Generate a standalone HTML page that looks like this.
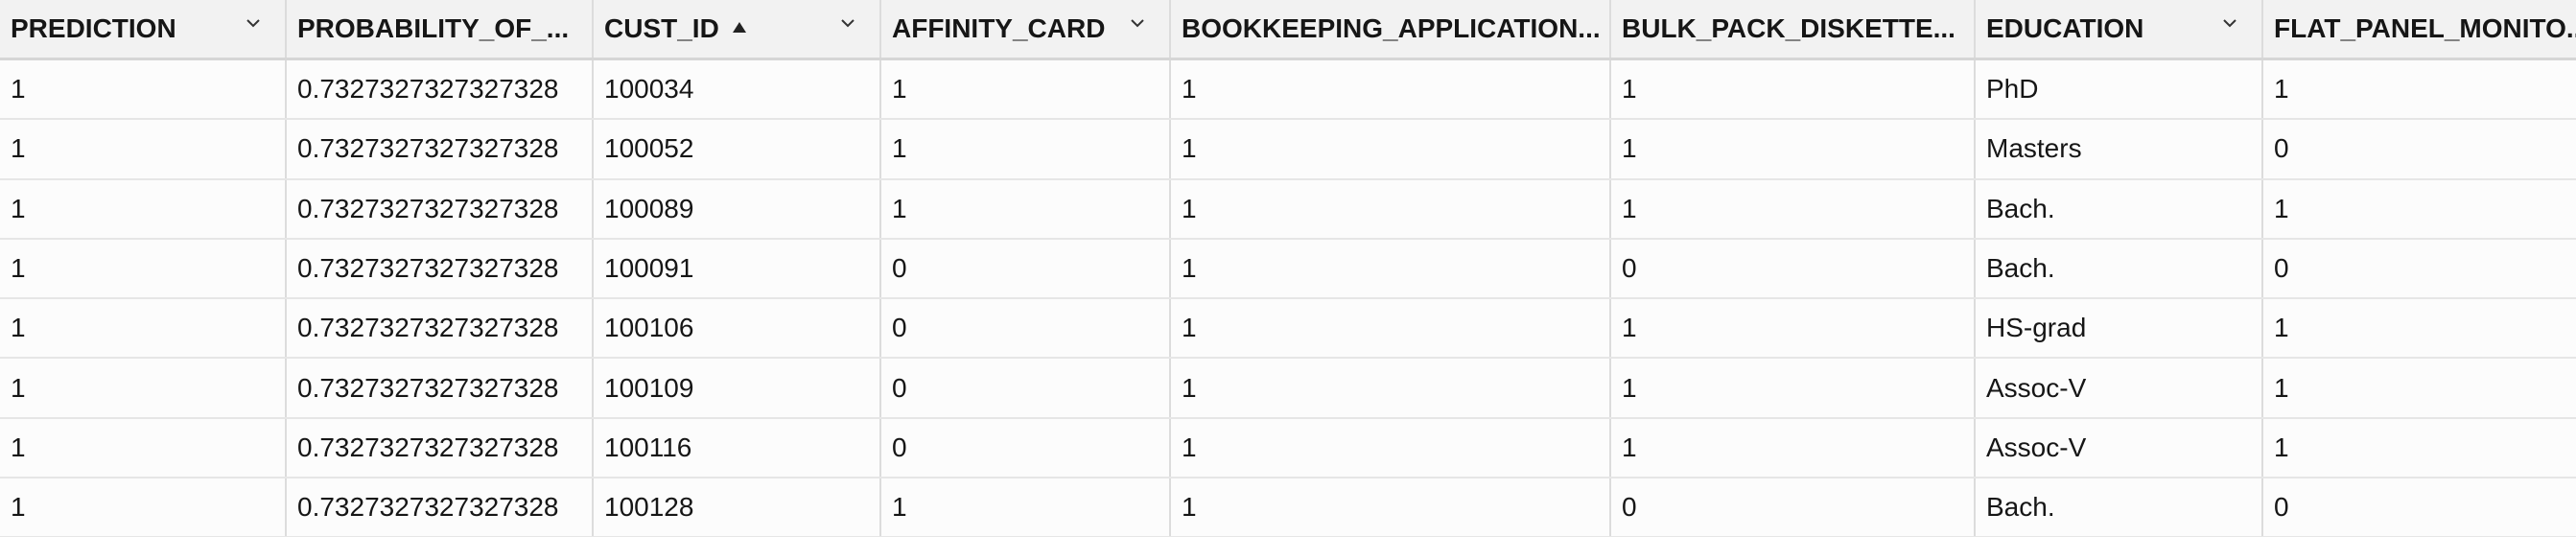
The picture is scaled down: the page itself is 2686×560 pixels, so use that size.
<!DOCTYPE html>
<html><head><meta charset="utf-8"><style>
html,body{margin:0;padding:0;width:2686px;height:560px;overflow:hidden;background:#fcfcfc;font-family:"Liberation Sans",Arial,sans-serif;color:#161616}
table{border-collapse:collapse;table-layout:fixed;width:2686px}
td,th{padding:0 0 0 11px;white-space:nowrap;overflow:hidden;text-align:left;border-left:2px solid #dcdcdc;position:relative}
td:first-child,th:first-child{border-left:none}
th{height:60px;background:#f2f2f2;font-size:28px;font-weight:bold;border-bottom:3px solid #d6d6d6}
td{height:60.3px;font-size:28px;border-bottom:2px solid #e6e6e6}
.t{display:block;overflow:hidden;text-overflow:ellipsis;padding-right:22px}
.c{position:absolute;right:26px;top:19px;width:14px;height:10px}
.c svg{display:block}
.tri{display:inline-block;margin-left:14px;width:0;height:0;border-left:7px solid transparent;border-right:7px solid transparent;border-bottom:11px solid #222;vertical-align:5px}
</style></head><body>
<table>
<colgroup><col style="width:298px"><col style="width:320px"><col style="width:300px"><col style="width:302px"><col style="width:459px"><col style="width:380px"><col style="width:300px"><col style="width:327px"></colgroup>
<tr>
<th><span class="t">PREDICTION</span><span class="c"><svg width="14" height="10" viewBox="0 0 14 10"><path d="M1 2 L7 8 L13 2" fill="none" stroke="#333" stroke-width="2"/></svg></span></th>
<th><span class="t" style="padding-right:14px">PROBABILITY_OF_...</span></th>
<th><span class="t">CUST_ID<span class="tri"></span></span><span class="c"><svg width="14" height="10" viewBox="0 0 14 10"><path d="M1 2 L7 8 L13 2" fill="none" stroke="#333" stroke-width="2"/></svg></span></th>
<th><span class="t">AFFINITY_CARD</span><span class="c"><svg width="14" height="10" viewBox="0 0 14 10"><path d="M1 2 L7 8 L13 2" fill="none" stroke="#333" stroke-width="2"/></svg></span></th>
<th><span class="t" style="padding-right:0">BOOKKEEPING_APPLICATION...</span></th>
<th><span class="t" style="padding-right:10px">BULK_PACK_DISKETTE...</span></th>
<th><span class="t">EDUCATION</span><span class="c"><svg width="14" height="10" viewBox="0 0 14 10"><path d="M1 2 L7 8 L13 2" fill="none" stroke="#333" stroke-width="2"/></svg></span></th>
<th><span class="t" style="padding-right:0;text-overflow:clip">FLAT_PANEL_MONITO...</span></th>
</tr>
<tr><td>1</td><td>0.7327327327327328</td><td>100034</td><td>1</td><td>1</td><td>1</td><td>PhD</td><td>1</td></tr>
<tr><td>1</td><td>0.7327327327327328</td><td>100052</td><td>1</td><td>1</td><td>1</td><td>Masters</td><td>0</td></tr>
<tr><td>1</td><td>0.7327327327327328</td><td>100089</td><td>1</td><td>1</td><td>1</td><td>Bach.</td><td>1</td></tr>
<tr><td>1</td><td>0.7327327327327328</td><td>100091</td><td>0</td><td>1</td><td>0</td><td>Bach.</td><td>0</td></tr>
<tr><td>1</td><td>0.7327327327327328</td><td>100106</td><td>0</td><td>1</td><td>1</td><td>HS-grad</td><td>1</td></tr>
<tr><td>1</td><td>0.7327327327327328</td><td>100109</td><td>0</td><td>1</td><td>1</td><td>Assoc-V</td><td>1</td></tr>
<tr><td>1</td><td>0.7327327327327328</td><td>100116</td><td>0</td><td>1</td><td>1</td><td>Assoc-V</td><td>1</td></tr>
<tr><td>1</td><td>0.7327327327327328</td><td>100128</td><td>1</td><td>1</td><td>0</td><td>Bach.</td><td>0</td></tr>
</table>
</body></html>
